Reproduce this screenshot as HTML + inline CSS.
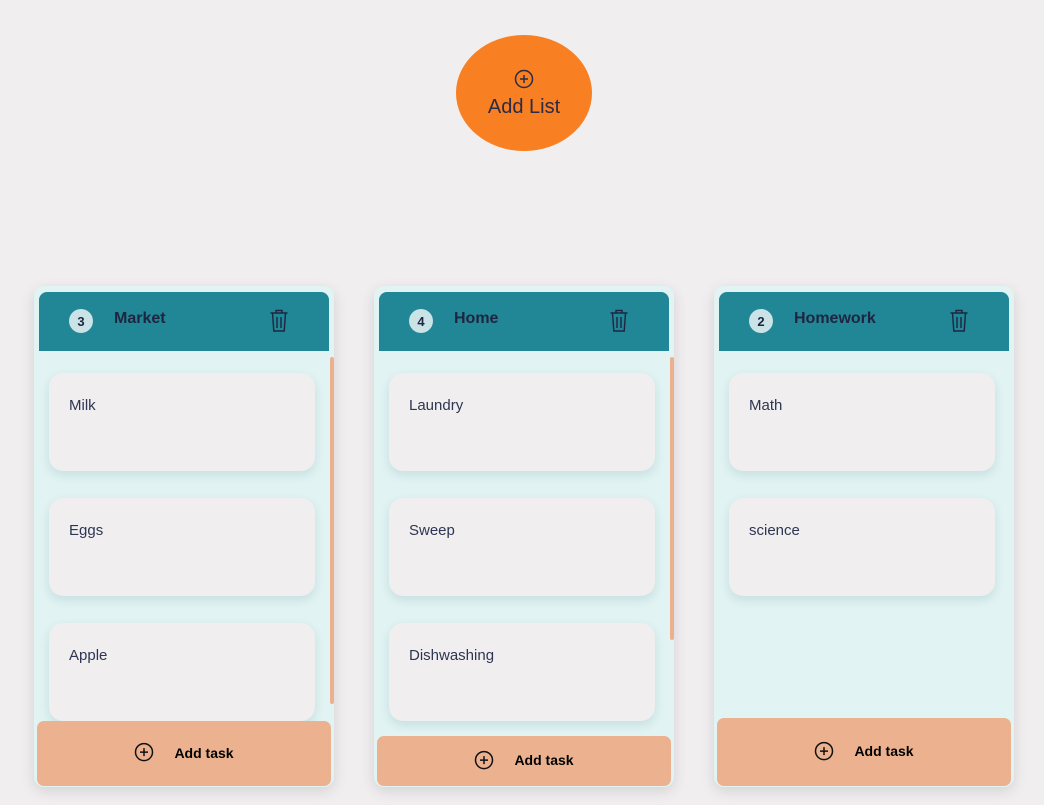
<!DOCTYPE html>
<html><head><style>
body{margin:0;width:1044px;height:805px;background:#f0eeef;font-family:"Liberation Sans",sans-serif;position:relative;overflow:hidden}
.addlist{position:absolute;left:456px;top:35px;width:136px;height:116px;border-radius:50%;background:#f87f22;color:#2b2b45;text-align:center}
.addlist svg{position:absolute;left:58px;top:34px}
.addlist span{position:absolute;left:0;right:0;top:61px;font-size:20px}
.col{position:absolute;top:286px;width:300px;height:501px;background:#e1f3f3;border-radius:10px;box-shadow:0 4px 14px rgba(0,0,0,.12);overflow:hidden}
.hd{position:absolute;left:5px;top:6px;width:290px;height:59px;background:#218695;border-radius:8px 8px 0 0}
.num{position:absolute;left:30px;top:17px;width:24px;height:24px;border-radius:50%;background:#c9e3e6;color:#1f2540;font-weight:bold;font-size:13px;text-align:center;line-height:25px}
.ttl{position:absolute;left:75px;top:18px;font-weight:bold;font-size:16px;color:#1f2540}
.trash{position:absolute;left:230px;top:17px}
.card{position:absolute;left:15px;width:266px;height:98px;background:#f0eeef;border-radius:14px;box-shadow:0 4px 10px rgba(0,80,90,.12)}
.card span{position:absolute;left:20px;top:24px;font-size:15px;color:#2e3552}
.scroll{position:absolute;left:296px;top:71px;width:4px;background:#ebb18e;border-radius:2px}
.btn{position:absolute;left:3px;width:294px;bottom:1px;background:#ecb28f;border-radius:7px}
.btn div{position:absolute;left:0;right:0;top:50%;transform:translateY(-50%);text-align:center;font-weight:bold;font-size:14px;color:#000}
.btn svg{vertical-align:middle;margin-right:20px;margin-top:-3px}
</style></head><body>
<div class="addlist"><svg width="20" height="20" viewBox="0 0 20 20"><circle cx="10" cy="10" r="8.5" fill="none" stroke="#2b2b45" stroke-width="1.5"/><path d="M10 6v8M6 10h8" stroke="#2b2b45" stroke-width="1.5"/></svg><span>Add List</span></div>

<div class="col" style="left:34px">
<div class="hd"><div class="num">3</div><div class="ttl">Market</div>
<svg class="trash" width="20" height="24" viewBox="0 0 20 24" fill="none" stroke="#1f2540" stroke-width="1.4"><path d="M1.5 4h17M7 4V1.5h6V4M3.5 4l1.3 18h10.4L16.5 4M8 8v11M12 8v11"/></svg></div>
<div class="scroll" style="height:347px"></div>
<div class="card" style="top:87px"><span>Milk</span></div>
<div class="card" style="top:212px"><span>Eggs</span></div>
<div class="card" style="top:337px"><span>Apple</span></div>
<div class="btn" style="height:65px"><div><svg width="20" height="20" viewBox="0 0 20 20"><circle cx="10" cy="10" r="8.5" fill="none" stroke="#111" stroke-width="1.5"/><path d="M10 6v8M6 10h8" stroke="#111" stroke-width="1.5"/></svg>Add task</div></div>
</div>

<div class="col" style="left:374px">
<div class="hd"><div class="num">4</div><div class="ttl">Home</div>
<svg class="trash" width="20" height="24" viewBox="0 0 20 24" fill="none" stroke="#1f2540" stroke-width="1.4"><path d="M1.5 4h17M7 4V1.5h6V4M3.5 4l1.3 18h10.4L16.5 4M8 8v11M12 8v11"/></svg></div>
<div class="scroll" style="height:283px"></div>
<div class="card" style="top:87px"><span>Laundry</span></div>
<div class="card" style="top:212px"><span>Sweep</span></div>
<div class="card" style="top:337px"><span>Dishwashing</span></div>
<div class="btn" style="height:50px"><div><svg width="20" height="20" viewBox="0 0 20 20"><circle cx="10" cy="10" r="8.5" fill="none" stroke="#111" stroke-width="1.5"/><path d="M10 6v8M6 10h8" stroke="#111" stroke-width="1.5"/></svg>Add task</div></div>
</div>

<div class="col" style="left:714px">
<div class="hd"><div class="num">2</div><div class="ttl">Homework</div>
<svg class="trash" width="20" height="24" viewBox="0 0 20 24" fill="none" stroke="#1f2540" stroke-width="1.4"><path d="M1.5 4h17M7 4V1.5h6V4M3.5 4l1.3 18h10.4L16.5 4M8 8v11M12 8v11"/></svg></div>
<div class="card" style="top:87px"><span>Math</span></div>
<div class="card" style="top:212px"><span>science</span></div>
<div class="btn" style="height:68px"><div><svg width="20" height="20" viewBox="0 0 20 20"><circle cx="10" cy="10" r="8.5" fill="none" stroke="#111" stroke-width="1.5"/><path d="M10 6v8M6 10h8" stroke="#111" stroke-width="1.5"/></svg>Add task</div></div>
</div>
</body></html>
